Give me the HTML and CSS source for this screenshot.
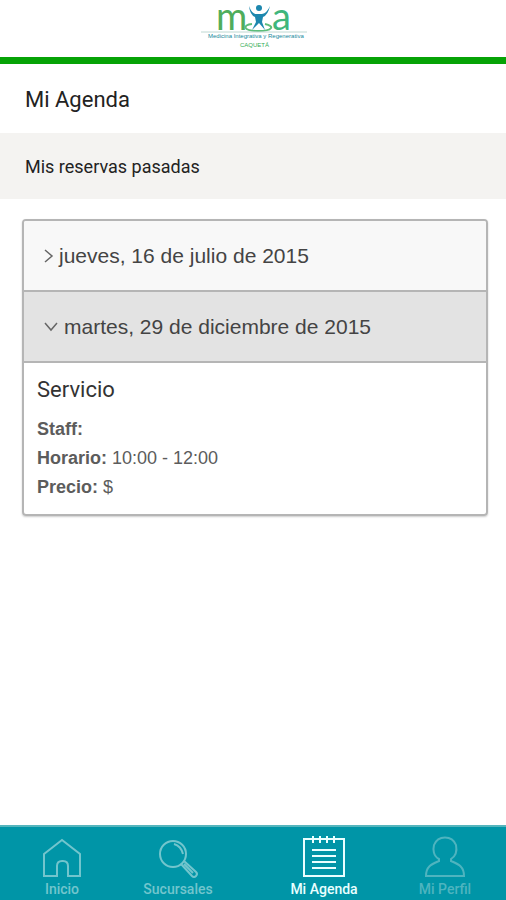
FILE: index.html
```
<!DOCTYPE html>
<html lang="es">
<head>
<meta charset="utf-8">
<meta name="viewport" content="width=device-width, initial-scale=1">
<title>Mi Agenda</title>
<link rel="stylesheet" href="styles.css">
</head>
<body>
<header class="brand">
  <svg class="logo" viewBox="0 0 110 54" role="img" aria-label="MIA Caquetá">
    <text class="logo-m" x="18" y="30">m</text>
    <text class="logo-a" x="74" y="30">a</text>
    <path class="swoosh" d="M54 24C44 25 45 31 60 31S77 26 67 24"/>
    <circle class="person-head" cx="61" cy="8" r="3"/>
    <path class="person" d="M51 6q3 8 7 8h6q5-1 8-8q-2 9-7 11l-1 5 3 8-6-7-7 7 4-8-1-5q-5-2-6-11z"/>
    <path class="rule" d="M3 32H109"/>
    <text class="logo-tag" x="10" y="38">Medicina Integrativa y Regenerativa</text>
    <text class="logo-city" x="42" y="47">CAQUETÁ</text>
  </svg>
</header>
<main class="content">
  <h1 class="title">Mi Agenda</h1>
  <h2 class="subtitle">Mis reservas pasadas</h2>
  <section class="card">
    <button class="day" type="button" aria-expanded="false">
      <svg class="chevron-right" viewBox="0 0 10 16"><path d="M1 2l7 6-7 6"/></svg>
      <span>jueves, 16 de julio de 2015</span>
    </button>
    <button class="day day-open" type="button" aria-expanded="true">
      <svg class="chevron-down" viewBox="0 0 15 16"><path d="M1 4l6 7 6-7"/></svg>
      <span>martes, 29 de diciembre de 2015</span>
    </button>
    <div class="details">
      <h3 class="service">Servicio</h3>
      <p><b>Staff:</b></p>
      <p><b>Horario:</b> 10:00 - 12:00</p>
      <p><b>Precio:</b> $</p>
    </div>
  </section>
</main>
<nav class="tabs">
  <a class="tab" href="#inicio">
    <svg class="icon" viewBox="0 0 44 44"><path d="M4 18L22 4l18 14v22H28V30q0-5-5-5h-1q-5 0-5 5v10H4z"/></svg>
    <span>Inicio</span>
  </a>
  <a class="tab" href="#sucursales">
    <svg class="icon" viewBox="0 0 44 44"><circle cx="17" cy="18" r="13"/><path d="M18 8q7 2 9 10M25 28l11 12q2 2 4 0t0-4L28 25M28 28l9 9"/></svg>
    <span>Sucursales</span>
  </a>
  <a class="tab tab-active" href="#agenda" aria-current="page">
    <svg class="icon" viewBox="0 0 44 44"><path d="M2 3h40v37H2zM10 14h24M10 20h24M10 26h24M10 32h24"/><path d="M11 0v7M18 0v7M25 0v7M32 0v7"/></svg>
    <span>Mi Agenda</span>
  </a>
  <a class="tab tab-dim" href="#perfil">
    <svg class="icon" viewBox="0 0 44 44"><path d="M16 23C10 20 10 13 11 9 15-1 29-1 33 9c1 5 0 11-5 14v2c7 3 13 5 13 15H3c0-10 6-12 13-15z"/></svg>
    <span>Mi Perfil</span>
  </a>
</nav>
</body>
</html>
```
FILE: styles.css
```
* { box-sizing: border-box; }
body {
  margin: 0;
  min-height: 100vh;
  display: flex;
  flex-direction: column;
  background: #fff;
  color: #222;
  font-family: Roboto, "Liberation Sans", sans-serif;
}
h1, h2, h3, p { margin: 0; font-weight: 400; }
svg { fill: none; flex: none; }

.brand {
  display: flex;
  justify-content: center;
  padding-bottom: 3px;
  border-bottom: 7px solid #06a306;
}
.logo { width: 110px; height: 54px; }
.logo-m, .logo-a { font: 38px Lato, sans-serif; }
.logo-m { fill: #4fad5b; }
.logo-a { fill: #3fb67c; }
.logo-tag { font: 6px "Liberation Sans", sans-serif; fill: #16899b; }
.logo-city { font: 6px "Liberation Sans", sans-serif; fill: #35ad55; }
.swoosh { stroke: #5dbd79; stroke-width: 2; }
.person, .person-head { fill: #1d87ae; }
.rule { stroke: #bfd8d2; }

.content { flex: 1; }
.title { padding: 21px 25px 18px; font-size: 22px; line-height: 30px; }
.subtitle {
  padding: 21px 25px 19px;
  background: #f4f3f1;
  font-size: 18px;
  line-height: 26px;
}
.card {
  margin: 20px 18px 0 22px;
  border: 2px solid #b5b5b5;
  border-radius: 4px;
  box-shadow: 0 1px 2px #ccc;
  overflow: hidden;
  font-family: "Liberation Sans", sans-serif;
  color: #5c5c5c;
}
.day {
  display: flex;
  align-items: center;
  gap: 5px;
  width: 100%;
  padding: 22px 20px;
  border: 0;
  border-bottom: 2px solid #b5b5b5;
  background: #f8f8f8;
  color: #444;
  font: 21px/25px "Liberation Sans", sans-serif;
  text-align: left;
}
.day-open { background: #e3e3e3; }
.chevron-right, .chevron-down { height: 16px; stroke: #666; stroke-width: 1.500; }
.chevron-right { width: 10px; }
.chevron-down { width: 15px; }
.details { padding: 12px 13px; font-size: 18px; line-height: 29px; }
.service {
  margin-bottom: 10px;
  color: #333;
  font: 22px/30px Roboto, sans-serif;
}

.tabs {
  display: grid;
  grid-template-columns: 124fr 108fr 184fr 58fr;
  padding: 8px 32px 0 0;
  height: 75px;
  border-top: 2px solid #55b5bd;
  background: #0095a7;
}
.tab {
  display: flex;
  flex-direction: column;
  align-items: center;
  color: #72c5cd;
  font-size: 14px;
  font-weight: 500;
  line-height: 16px;
  text-decoration: none;
  white-space: nowrap;
}
.icon { width: 44px; height: 46px; stroke: currentColor; stroke-width: 2; }
.tab-active { color: #e9ffff; }
.tab-dim { color: #4eb4bf; }
```
